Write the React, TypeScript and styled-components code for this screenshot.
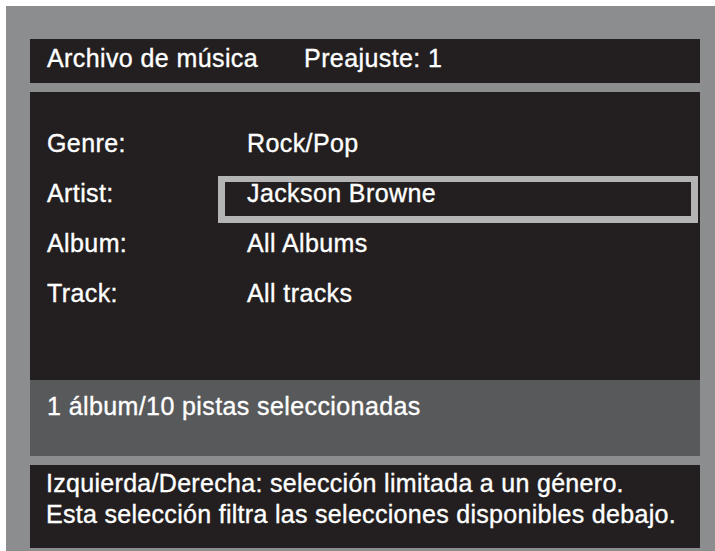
import React from "react";
import styled, { createGlobalStyle } from "styled-components";

const Global = createGlobalStyle`
  html, body { margin: 0; padding: 0; background: #ffffff; }
  body { padding: 6px 0 0 6px; height: 551px; box-sizing: border-box; overflow: hidden; }
  #root { height: 100%; }
`;

const Frame = styled.div`
  height: 100%;
  box-sizing: border-box;
  background: #8c8d8f;
  padding: 33px 15px 0 24px;
  display: flex;
  flex-direction: column;
  font-family: "Liberation Sans", Arial, Helvetica, sans-serif;
  color: #ffffff;
  font-size: 25px;
  letter-spacing: 0.4px;
  -webkit-text-stroke: 0.35px #ffffff;
`;

const Header = styled.div`
  height: 44px;
  box-sizing: border-box;
  background: #231f20;
  padding: 7px 17px 0;
  line-height: 25px;
  display: flex;
  gap: 46px;
`;

const Main = styled.div`
  margin-top: 9px;
  height: 288px;
  box-sizing: border-box;
  background: #231f20;
  padding: 34px 2px 0 17px;
  display: flex;
  flex-direction: column;
  gap: 3px;
`;

const Row = styled.div`
  display: grid;
  grid-template-columns: 171px 1fr;
  height: 47px;
`;

const Label = styled.div`
  padding-top: 7px;
  line-height: 21px;
`;

const Value = styled.div<{ $selected?: boolean }>`
  box-sizing: border-box;
  height: 47px;
  border: 7px solid ${(p) => (p.$selected ? "#b4b4b4" : "transparent")};
  border-top-width: 6px;
  padding-left: 22px;
  line-height: 23px;
`;

const Status = styled.div`
  height: 76px;
  box-sizing: border-box;
  background: #58595b;
  padding: 14px 17px 0;
  line-height: 25px;
`;

const Help = styled.div`
  margin-top: 9px;
  height: 83px;
  box-sizing: border-box;
  background: #231f20;
  padding: 3px 0 0 16px;
  line-height: 31px;
  letter-spacing: 0.3px;
  white-space: nowrap;
`;

const rows = [
  { label: "Genre:", value: "Rock/Pop" },
  { label: "Artist:", value: "Jackson Browne", selected: true },
  { label: "Album:", value: "All Albums" },
  { label: "Track:", value: "All tracks" },
];

export default function App() {
  return (
    <>
      <Global />
      <Frame>
        <Header>
          <span>Archivo de música</span>
          <span>Preajuste: 1</span>
        </Header>
        <Main>
          {rows.map((r) => (
            <Row key={r.label}>
              <Label>{r.label}</Label>
              <Value $selected={r.selected}>{r.value}</Value>
            </Row>
          ))}
        </Main>
        <Status>1 álbum/10 pistas seleccionadas</Status>
        <Help>
          <div>Izquierda/Derecha: selección limitada a un género.</div>
          <div>Esta selección filtra las selecciones disponibles debajo.</div>
        </Help>
      </Frame>
    </>
  );
}
